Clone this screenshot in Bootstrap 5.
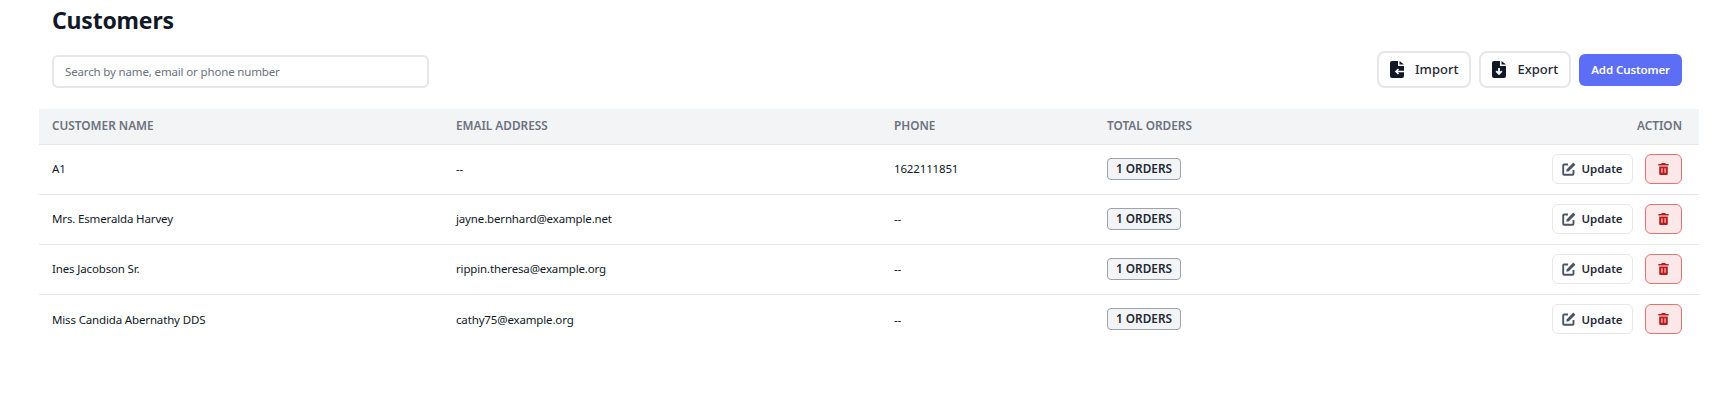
<!DOCTYPE html>
<html lang="en">
<head>
    <meta charset="UTF-8">
    <meta name="viewport" content="width=device-width, initial-scale=1.0">
    <title>Customers</title>
    <link rel="stylesheet" href="https://cdn.jsdelivr.net/npm/bootstrap@5.3.0/dist/css/bootstrap.min.css">
    <style>
        body { font-family: "Noto Sans", "Open Sans", sans-serif; color: #111827; background: #fff; font-size: 12px; }
        .page-wrap { padding: 0 23px 0 39px; }
        .page-title { font-size: 23px; letter-spacing: -0.2px; font-weight: 700; line-height: 32px; margin: 4px 0 0 13px; color: #111827; }
        .tool-row { margin: 15px 0 21px 13px; padding-right: 17px; height: 37px; }
        .search-box { width: 377px; height: 33px; font-size: 11.5px; letter-spacing: -0.15px; padding: 0 11px; border: 2px solid #e5e7eb; border-radius: 6px; margin-top: 4px; color: #374151; }
        .search-box::placeholder { color: #6b7280; }
        .tool-btn { height: 37px; border: 2px solid #e5e7eb; border-radius: 8px; background: #fff; color: #1f2937; font-size: 13px; font-weight: 500; padding: 0 11px; gap: 11px; }
        .add-btn { height: 32px; background: #5b6ef5; color: #fff; border: 0; border-radius: 6px; font-size: 11.5px; font-weight: 600; padding: 0 12px; letter-spacing: -0.1px; }
        .add-btn:hover { background: #5b6ef5; color: #fff; }
        .cust-table { margin: 0; table-layout: fixed; width: 100%; font-size: 11.5px; letter-spacing: -0.15px; }
        .cust-table th { background: #f3f4f6; color: #6b7280; font-weight: 600; font-size: 11.8px; letter-spacing: 0; height: 35px; padding: 0 17px 0 13px; border-bottom: 1px solid #e5e7eb; vertical-align: middle; white-space: nowrap; }
        .cust-table td { height: 50px; padding: 0 13px; vertical-align: middle; color: #111827; border-bottom: 1px solid #e5e7eb; }
        .cust-table tr:last-child td { border-bottom: 0; }
        .col-name { width: 404px; }
        .col-email { width: 438px; }
        .col-phone { width: 213px; }
        .order-tag { display: inline-block; height: 22px; line-height: 19px; padding: 0 8px; background: #f3f4f6; border: 1px solid #9ca3af; border-radius: 4px; font-size: 11.8px; letter-spacing: 0; font-weight: 600; color: #1f2937; }
        .update-btn { height: 30px; width: 81px; background: #fff; border: 1px solid #e5e7eb; border-radius: 6px; font-size: 11.5px; font-weight: 600; color: #1f2937; gap: 5px; padding: 0; }
        .trash-btn { height: 30px; width: 37px; background: #fce8e8; border: 1px solid #e57373; border-radius: 6px; padding: 0; }
        .act-wrap { gap: 12px; padding-right: 4px; }
    </style>
</head>
<body>
    <div class="page-wrap">
        <h1 class="page-title">Customers</h1>

        <div class="tool-row d-flex justify-content-between align-items-start">
            <input type="text" class="form-control search-box" placeholder="Search by name, email or phone number">
            <div class="d-flex gap-2 align-items-center">
                <button class="btn tool-btn d-flex align-items-center">
                    <!-- file import -->
                    <svg width="14" height="17" viewBox="0 0 14 17"><path fill="#111827" d="M2 0h6v5h6v10a2 2 0 0 1-2 2H2a2 2 0 0 1-2-2V2a2 2 0 0 1 2-2zM9.500 0 14 3.600H9.500z"/><path fill="none" stroke="#fff" stroke-width="1.600" d="M14 10.500H6M8.500 8 6 10.500 8.500 13"/></svg>
                    Import
                </button>
                <button class="btn tool-btn d-flex align-items-center">
                    <!-- file export -->
                    <svg width="14" height="17" viewBox="0 0 14 17"><path fill="#111827" d="M2 0h6v5h6v10a2 2 0 0 1-2 2H2a2 2 0 0 1-2-2V2a2 2 0 0 1 2-2zM9.500 0 14 3.600H9.500z"/><path fill="none" stroke="#fff" stroke-width="1.800" d="M7 7v6M4.200 10.200 7 13l2.800-2.800"/></svg>
                    Export
                </button>
                <button class="btn add-btn">Add Customer</button>
            </div>
        </div>

        <table class="cust-table">
            <thead>
                <tr>
                    <th class="col-name">CUSTOMER NAME</th>
                    <th class="col-email">EMAIL ADDRESS</th>
                    <th class="col-phone">PHONE</th>
                    <th>TOTAL ORDERS</th>
                    <th class="text-end">ACTION</th>
                </tr>
            </thead>
            <tbody id="rows"></tbody>
        </table>
    </div>

    <script>
        const customers = [
            ['A1', '--', '1622111851'],
            ['Mrs. Esmeralda Harvey', 'jayne.bernhard@example.net', '--'],
            ['Ines Jacobson Sr.', 'rippin.theresa@example.org', '--'],
            ['Miss Candida Abernathy DDS', 'cathy75@example.org', '--']
        ];
        const editIcon = '<svg width="14" height="14" viewBox="0 0 14 14"><path fill="none" stroke="#4b5563" stroke-width="1.900" d="M6 2.500H2.200a1 1 0 0 0-1 1v8.300a1 1 0 0 0 1 1h8.300a1 1 0 0 0 1-1V8"/><path fill="#4b5563" d="M11.300.6 13.400 2.700 6.800 9.300 4.300 9.800 4.800 7.200z"/></svg>';
        const trashIcon = '<svg width="11" height="12" viewBox="0 0 12 14"><path fill="#b91c1c" d="M4 0h4l.6 1.200H12v1.600H0V1.200h3.400zM1 4h10v8.500A1.500 1.500 0 0 1 9.500 14h-7A1.500 1.500 0 0 1 1 12.500z"/><path stroke="#fce8e8" stroke-width="1.200" d="M4.200 6v5.500M7.800 6v5.500"/></svg>';

        const tbody = document.getElementById('rows');
        customers.forEach(c => {
            const tr = document.createElement('tr');
            tr.innerHTML = `<td>${c[0]}</td><td>${c[1]}</td><td>${c[2]}</td>
                <td><span class="order-tag">1 ORDERS</span></td>
                <td><div class="d-flex justify-content-end act-wrap">
                    <button class="btn update-btn d-flex align-items-center justify-content-center">${editIcon}Update</button>
                    <button class="btn trash-btn d-flex align-items-center justify-content-center">${trashIcon}</button>
                </div></td>`;
            tbody.appendChild(tr);
        });
    </script>
    <script src="https://cdn.jsdelivr.net/npm/bootstrap@5.3.0/dist/js/bootstrap.bundle.min.js"></script>
</body>
</html>
